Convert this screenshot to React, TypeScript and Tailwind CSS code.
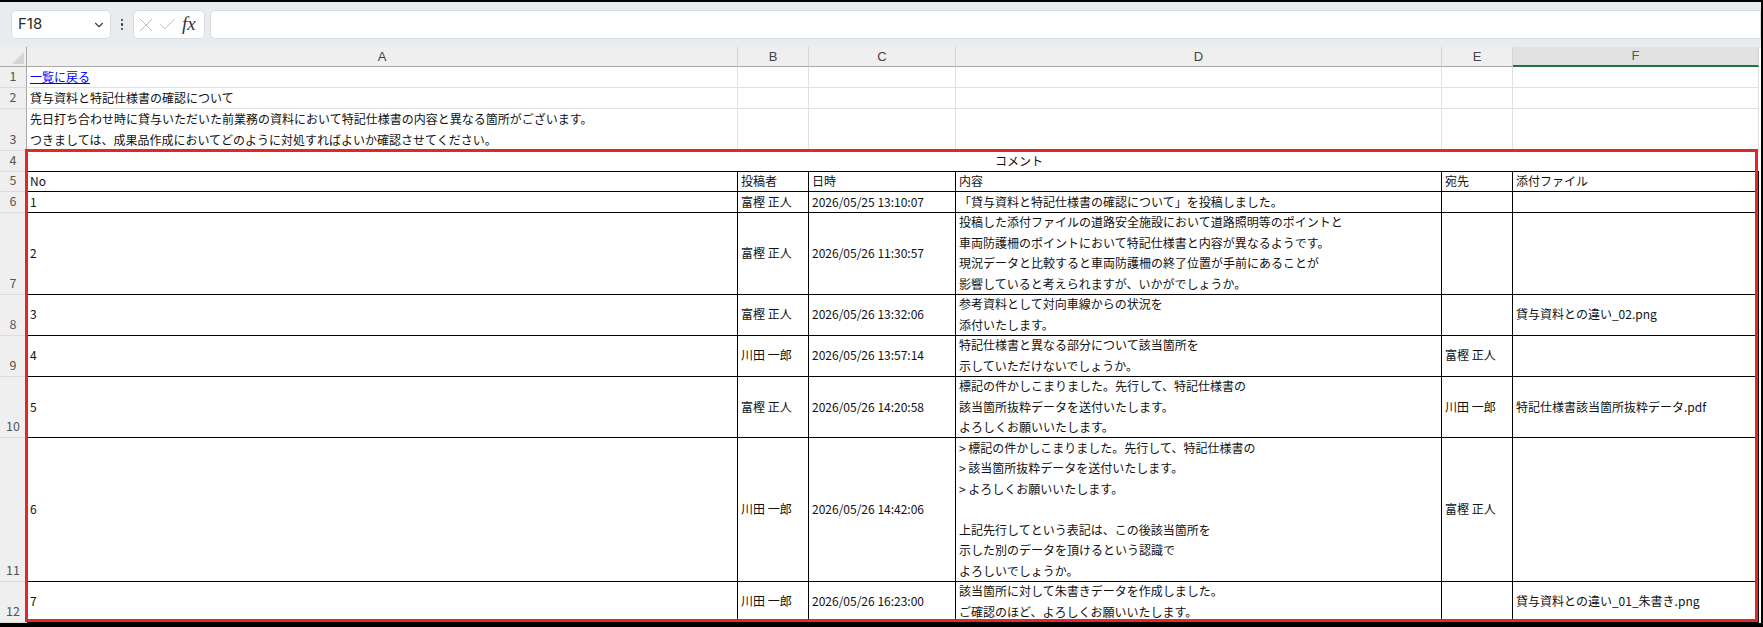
import React from "react";
import { ChevronDown, X, Check } from "lucide-react";

type DataRow = {
  n: number;
  h: string;
  a: string;
  b: string;
  c: string;
  d: string;
  e: string;
  f: string;
};

const rows: DataRow[] = [
  { n: 5, h: "h-[20.5px]", a: "No", b: "投稿者", c: "日時", d: "内容", e: "宛先", f: "添付ファイル" },
  { n: 6, h: "h-[20.5px]", a: "1", b: "富樫 正人", c: "2026/05/25 13:10:07", d: "「貸与資料と特記仕様書の確認について」を投稿しました。", e: "", f: "" },
  {
    n: 7,
    h: "h-[82px]",
    a: "2",
    b: "富樫 正人",
    c: "2026/05/26 11:30:57",
    d: "投稿した添付ファイルの道路安全施設において道路照明等のポイントと\n車両防護柵のポイントにおいて特記仕様書と内容が異なるようです。\n現況データと比較すると車両防護柵の終了位置が手前にあることが\n影響していると考えられますが、いかがでしょうか。",
    e: "",
    f: "",
  },
  { n: 8, h: "h-[41px]", a: "3", b: "富樫 正人", c: "2026/05/26 13:32:06", d: "参考資料として対向車線からの状況を\n添付いたします。", e: "", f: "貸与資料との違い_02.png" },
  { n: 9, h: "h-[41px]", a: "4", b: "川田 一郎", c: "2026/05/26 13:57:14", d: "特記仕様書と異なる部分について該当箇所を\n示していただけないでしょうか。", e: "富樫 正人", f: "" },
  {
    n: 10,
    h: "h-[61.5px]",
    a: "5",
    b: "富樫 正人",
    c: "2026/05/26 14:20:58",
    d: "標記の件かしこまりました。先行して、特記仕様書の\n該当箇所抜粋データを送付いたします。\nよろしくお願いいたします。",
    e: "川田 一郎",
    f: "特記仕様書該当箇所抜粋データ.pdf",
  },
  {
    n: 11,
    h: "h-[143.5px]",
    a: "6",
    b: "川田 一郎",
    c: "2026/05/26 14:42:06",
    d: "> 標記の件かしこまりました。先行して、特記仕様書の\n> 該当箇所抜粋データを送付いたします。\n> よろしくお願いいたします。\n\n上記先行してという表記は、この後該当箇所を\n示した別のデータを頂けるという認識で\nよろしいでしょうか。",
    e: "富樫 正人",
    f: "",
  },
  {
    n: 12,
    h: "h-[41px]",
    a: "7",
    b: "川田 一郎",
    c: "2026/05/26 16:23:00",
    d: "該当箇所に対して朱書きデータを作成しました。\nご確認のほど、よろしくお願いいたします。",
    e: "",
    f: "貸与資料との違い_01_朱書き.png",
  },
];

const rowHead =
  "flex items-end justify-center pb-[1px] bg-[#efefef] border-r border-b border-r-[#a9a9a9] border-b-[#dadada] text-[12.5px] leading-[20px] text-[#555]";
const greyCell = "border-r border-b border-[#e1e1e1] bg-white";
const blackCell =
  "flex items-center px-[3px] border-r border-b border-black bg-white whitespace-pre overflow-hidden text-[12px] leading-[20.5px] text-[#111]";

function RowHeader({ n, h }: { n: number; h: string }) {
  return <div className={`${rowHead} ${h}`}>{n}</div>;
}

export default function App() {
  const colLetters = ["A", "B", "C", "D", "E", "F"];
  return (
    <div className="w-[1763px] h-[627px] bg-black pt-[2px] pr-[2px] pb-[4px] overflow-hidden font-['Noto_Sans_CJK_JP','Noto_Sans',sans-serif]">
      <div className="relative h-full w-full bg-white overflow-hidden flex flex-col">
        {/* Toolbar */}
        <div className="h-[45px] shrink-0 bg-[#e9ecef] flex items-start pt-[8px] pl-[11px]">
          <div className="w-[100px] h-[29px] bg-white border border-[#d9dcdf] rounded-[5px] flex items-center pl-[6px] pr-[4px] justify-between">
            <span className="font-['Inter',sans-serif] text-[15px] text-[#2b2b2b]">F18</span>
            <ChevronDown size={14} strokeWidth={2} className="text-[#444]" />
          </div>
          <div className="w-[22px] h-[29px] flex flex-col items-center justify-center gap-[2px]">
            <span className="w-[2.5px] h-[2.5px] bg-[#333] rounded-full" />
            <span className="w-[2.5px] h-[2.5px] bg-[#333] rounded-full" />
            <span className="w-[2.5px] h-[2.5px] bg-[#333] rounded-full" />
          </div>
          <div className="w-[72px] h-[29px] bg-white border border-[#d9dcdf] rounded-[5px] flex items-center pl-0 gap-0">
            <X size={24} strokeWidth={1} className="text-[#bdbdbd]" />
            <Check size={21} strokeWidth={1.1} className="text-[#bdbdbd] ml-[-1px]" />
            <span className="font-['Liberation_Serif',serif] italic text-[19px] leading-none text-[#333] ml-[4px] mb-[2px]">
              fx
            </span>
          </div>
          <div className="ml-[5px] flex-1 h-[29px] bg-white border border-[#d9dcdf] rounded-l-[5px]" />
        </div>

        {/* Grid */}
        <div className="grid grid-cols-[27px_711px_71px_147px_486px_71px_246px] content-start">
          {/* Column header row */}
          <div className="h-[20px] bg-[#efefef] border-r border-b border-r-[#a9a9a9] border-b-[#a9a9a9] flex items-end justify-end pr-[2px] pb-[2px]">
            <svg width="12" height="12" viewBox="0 0 12 12">
              <polygon points="12,0 12,12 0,12" fill="#d5d5d5" />
            </svg>
          </div>
          {colLetters.map((l) =>
            l === "F" ? (
              <div
                key={l}
                className="h-[20px] bg-[#e1e1e1] border-b-2 border-b-[#217346] border-r border-r-[#d0d0d0] flex items-center justify-center font-['Liberation_Sans',sans-serif] text-[13px] text-[#217346]"
              >
                {l}
              </div>
            ) : (
              <div
                key={l}
                className="h-[20px] bg-[#efefef] border-b border-b-[#a9a9a9] border-r border-r-[#d4d4d4] flex items-center justify-center font-['Liberation_Sans',sans-serif] text-[13px] text-[#444]"
              >
                {l}
              </div>
            )
          )}

          {/* Row 1 */}
          <RowHeader n={1} h="h-[21px]" />
          <div className={`${greyCell} h-[21px] flex items-center px-[3px] text-[12px]`}>
            <span className="text-[#0000ff] underline">一覧に戻る</span>
          </div>
          {[0, 1, 2, 3, 4].map((i) => (
            <div key={`r1-${i}`} className={`${greyCell} h-[21px]`} />
          ))}

          {/* Row 2 */}
          <RowHeader n={2} h="h-[21px]" />
          <div className={`${greyCell} h-[21px] flex items-center px-[3px] text-[12px] text-[#111]`}>
            貸与資料と特記仕様書の確認について
          </div>
          {[0, 1, 2, 3, 4].map((i) => (
            <div key={`r2-${i}`} className={`${greyCell} h-[21px]`} />
          ))}

          {/* Row 3 */}
          <RowHeader n={3} h="h-[42px]" />
          <div className={`${greyCell} h-[42px] flex flex-col justify-center px-[3px] text-[12px] leading-[20.5px] text-[#111] whitespace-nowrap`}>
            <span>先日打ち合わせ時に貸与いただいた前業務の資料において特記仕様書の内容と異なる箇所がございます。</span>
            <span>つきましては、成果品作成においてどのように対処すればよいか確認させてください。</span>
          </div>
          {[0, 1, 2, 3, 4].map((i) => (
            <div key={`r3-${i}`} className={`${greyCell} h-[42px]`} />
          ))}

          {/* Row 4 merged */}
          <RowHeader n={4} h="h-[20.5px]" />
          <div className="col-span-6 h-[20.5px] border-b border-black bg-white overflow-hidden">
            <div className="w-[1984px] h-full flex items-center justify-center text-[12px] text-[#111]">コメント</div>
          </div>

          {/* Table rows */}
          {rows.map((r) => (
            <React.Fragment key={r.n}>
              <RowHeader n={r.n} h={r.h} />
              <div className={`${blackCell} ${r.h}`}>{r.a}</div>
              <div className={`${blackCell} ${r.h}`}>{r.b}</div>
              <div className={`${blackCell} ${r.h}`}>{r.c}</div>
              <div className={`${blackCell} ${r.h}`}>{r.d}</div>
              <div className={`${blackCell} ${r.h}`}>{r.e}</div>
              <div className={`${blackCell} ${r.h}`}>{r.f}</div>
            </React.Fragment>
          ))}
        </div>

        {/* Red annotation frame */}
        <div className="absolute left-[25px] top-[146.5px] w-[1733px] h-[473px] border-[3.5px] border-[#e32626] pointer-events-none" />
      </div>
    </div>
  );
}
